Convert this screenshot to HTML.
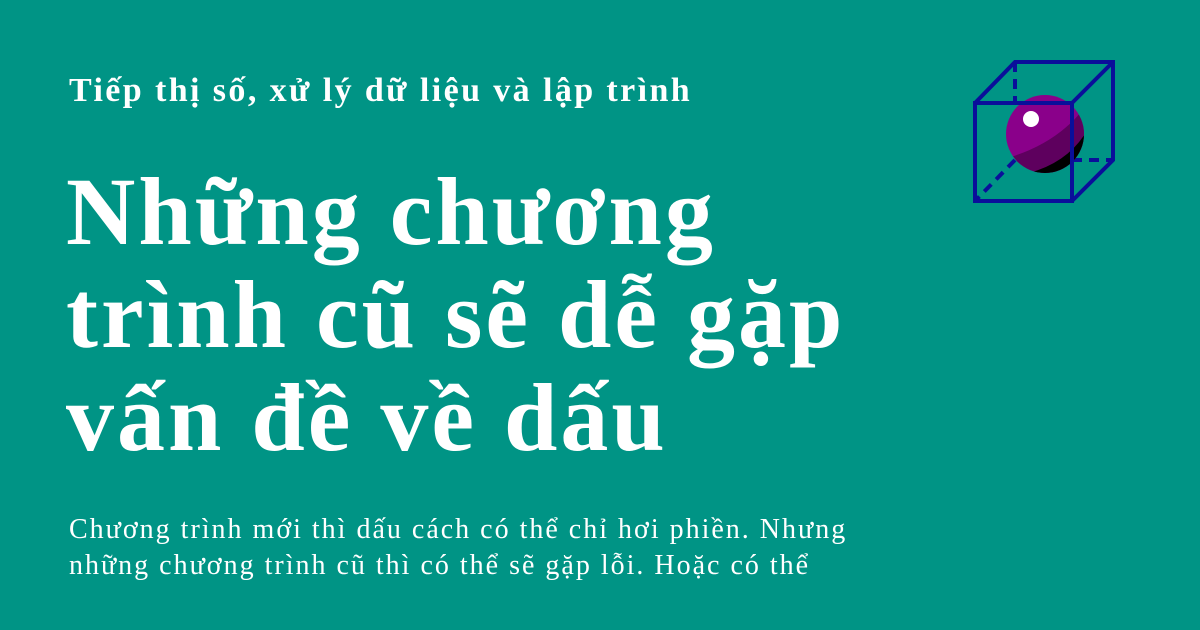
<!DOCTYPE html>
<html><head><meta charset="utf-8"><style>
html,body{margin:0;padding:0}
body{width:1200px;height:630px;background:#009485;position:relative;overflow:hidden;font-family:"Liberation Serif",serif;color:#fff}
.sub{position:absolute;left:69px;top:72px;font-size:34px;font-weight:bold;letter-spacing:2.4px;white-space:nowrap}
.title{position:absolute;left:66px;top:160px;font-size:96px;font-weight:bold;line-height:103px;letter-spacing:3px;white-space:nowrap}
.body{position:absolute;left:69px;top:512px;font-size:28px;line-height:36px;letter-spacing:2px;white-space:nowrap}
svg{position:absolute;left:0;top:0}
</style></head><body>
<div class="sub">Tiếp thị số, xử lý dữ liệu và lập trình</div>
<div class="title">Những chương<br>trình cũ sẽ dễ gặp<br>vấn đề về dấu</div>
<div class="body">Chương trình mới thì dấu cách có thể chỉ hơi phiền. Nhưng<br>những chương trình cũ thì có thể sẽ gặp lỗi. Hoặc có thể</div>
<svg width="1200" height="630">
<defs><clipPath id="c"><circle cx="1045" cy="134" r="39"/></clipPath></defs>
<g stroke="#0a0f9a" stroke-width="4" fill="none">
<line x1="1015" y1="62" x2="1015" y2="103" stroke-dasharray="10 7"/>
<line x1="1015" y1="160" x2="977" y2="199" stroke-dasharray="10 7"/>
<line x1="1072" y1="160" x2="1113" y2="160" stroke-dasharray="10 7"/>
</g>
<circle cx="1045" cy="134" r="39" fill="#8a008a"/>
<g clip-path="url(#c)">
<path d="M1000 160 Q1060 145 1090 100 L1100 190 L1000 190Z" fill="#5e005e"/>
<path d="M1020 175 Q1070 165 1090 125 L1100 190 L1020 190Z" fill="#000"/>
</g>
<circle cx="1031" cy="119" r="8" fill="#fff"/>
<g stroke="#0a0f9a" stroke-width="4" fill="none">
<rect x="975" y="103" width="97" height="98"/>
<polyline points="975,103 1015,62 1113,62 1113,160 1072,201"/>
<line x1="1072" y1="103" x2="1113" y2="62"/>
</g>
</svg>
</body></html>
